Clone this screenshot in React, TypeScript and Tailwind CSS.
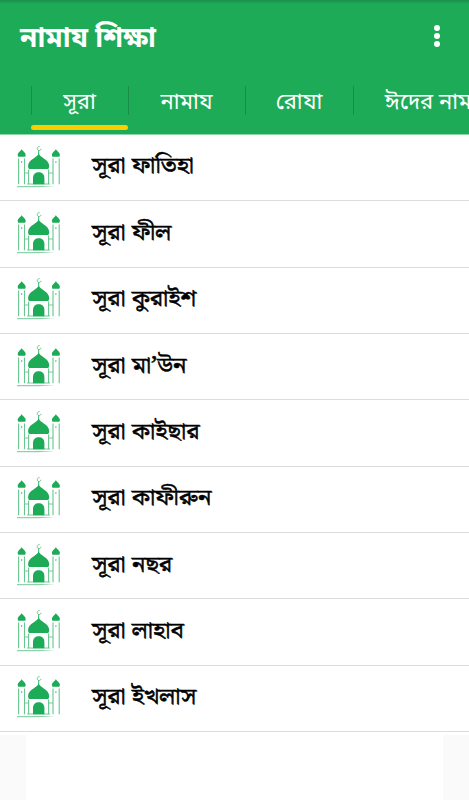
interface Tab {
  label: string;
  className: string;
  active?: boolean;
}

const tabs: Tab[] = [
  { label: "সূরা", className: "w-[97px]", active: true },
  { label: "নামায", className: "w-[117px]" },
  { label: "রোযা", className: "w-[108px]" },
  { label: "ঈদের নামায", className: "w-[170px]" },
];

const suras = [
  "সূরা ফাতিহা",
  "সূরা ফীল",
  "সূরা কুরাইশ",
  "সূরা মা’উন",
  "সূরা কাইছার",
  "সূরা কাফীরুন",
  "সূরা নছর",
  "সূরা লাহাব",
  "সূরা ইখলাস",
];

const MosqueIcon = () => (
  <svg viewBox="0 0 44 44" className="w-11 h-11 shrink-0" fill="none">
    {/* crescent and spire */}
    <path d="M22.6 0.6C19.8 0.4 19.3 4.4 22 4.5C23.2 4.5 23.9 3.8 24 2.8" stroke="#4dba7a" strokeWidth="0.8" />
    <path d="M21.7 4.5v5" stroke="#1eab58" strokeWidth="0.9" />
    {/* main dome */}
    <path
      d="M21.7 7.5C22.2 11.3 32.2 13.3 32.2 20C32.2 21.3 31.8 22.5 31.2 23H12.2C11.5 22.5 11.1 21.3 11.1 20C11.1 13.3 21.2 11.3 21.7 7.5Z"
      fill="#1eab58"
    />
    {/* minaret caps */}
    <path d="M4.7 2.9C5.3 5 8.7 6.1 8.7 9L8.2 10.8H1.2L0.7 9C0.7 6.1 4.1 5 4.7 2.9Z" fill="#1eab58" />
    <path d="M38.9 2.9C39.5 5 42.9 6.1 42.9 9L42.4 10.8H35.4L34.9 9C34.9 6.1 38.3 5 38.9 2.9Z" fill="#1eab58" />
    {/* minaret walls */}
    <path
      d="M1.6 12.5V38.3M7.5 12.5V38.3M36 12.5V38.3M42.2 12.5V38.3M11.6 23.5V38M31.6 23.5V38"
      stroke="#68c590"
      strokeWidth="1.1"
    />
    <path d="M4.7 15v2M38.9 15v2" stroke="#4dba7a" strokeWidth="0.9" />
    <path d="M7.5 27h4M31.6 27h4.4M10 38h23" stroke="#68c590" strokeWidth="0.9" />
    {/* door */}
    <path d="M16 38.3V32C16 28.3 18.5 26.3 21.7 26.3S27.4 28.3 27.4 32V38.3Z" fill="#1eab58" />
    <path d="M0 40.1H38L22 41.3H0Z" fill="#8fd1aa" />
  </svg>
);

const Header = () => (
  <header className="h-[134px] shrink-0 bg-[#1eab58] text-white overflow-hidden">
    <div className="h-1 bg-linear-to-b from-[#17904a] to-[#1eab58]" />
    <div className="h-16 flex items-center justify-between pl-5 pr-[29px]">
      <h1 className="text-[28px] leading-none font-bold whitespace-nowrap">নামায শিক্ষা</h1>
      <button aria-label="menu" className="flex flex-col gap-[2px]">
        <span className="size-1.5 rounded-full bg-white" />
        <span className="size-1.5 rounded-full bg-white" />
        <span className="size-1.5 rounded-full bg-white" />
      </button>
    </div>
    <nav className="flex ml-[31px] w-[492px] pt-[18px]">
      {tabs.map((tab) => (
        <div key={tab.label} className={`shrink-0 ${tab.className}`}>
          <div className="h-[29px] flex items-center justify-center border-l border-[#188d48] pr-px pb-0.5 text-[22px] leading-none whitespace-nowrap">
            {tab.label}
          </div>
          {tab.active && <div className="mt-[10px] h-[5px] rounded-full bg-[#ffcc00]" />}
        </div>
      ))}
    </nav>
  </header>
);

const SuraRow = ({ name }: { name: string }) => (
  <li className="h-[66.35px] flex items-center gap-[31px] pl-[17px] border-b border-[#dcdcdc]">
    <MosqueIcon />
    <span className="font-['Noto_Serif_Bengali','Noto_Sans','Noto_Sans_Bengali',serif] text-[22.4px] leading-none text-black whitespace-nowrap origin-left scale-x-[1.14] scale-y-[1.03] [-webkit-text-stroke:0.5px_black]">
      {name}
    </span>
  </li>
);

const App = () => {
  return (
    <div className="w-[469px] h-[800px] bg-white overflow-hidden flex flex-col font-['Noto_Sans','Noto_Sans_Bengali',sans-serif]">
      <Header />
      <ul className="shrink-0 border-t border-[#8ed5ab]">
        {suras.map((name) => (
          <SuraRow key={name} name={name} />
        ))}
      </ul>
      <div className="flex-1 mt-[3px] flex justify-between">
        <div className="w-[26px] bg-[#fafafa]" />
        <div className="w-[26px] bg-[#fafafa]" />
      </div>
    </div>
  );
};

export default App;
